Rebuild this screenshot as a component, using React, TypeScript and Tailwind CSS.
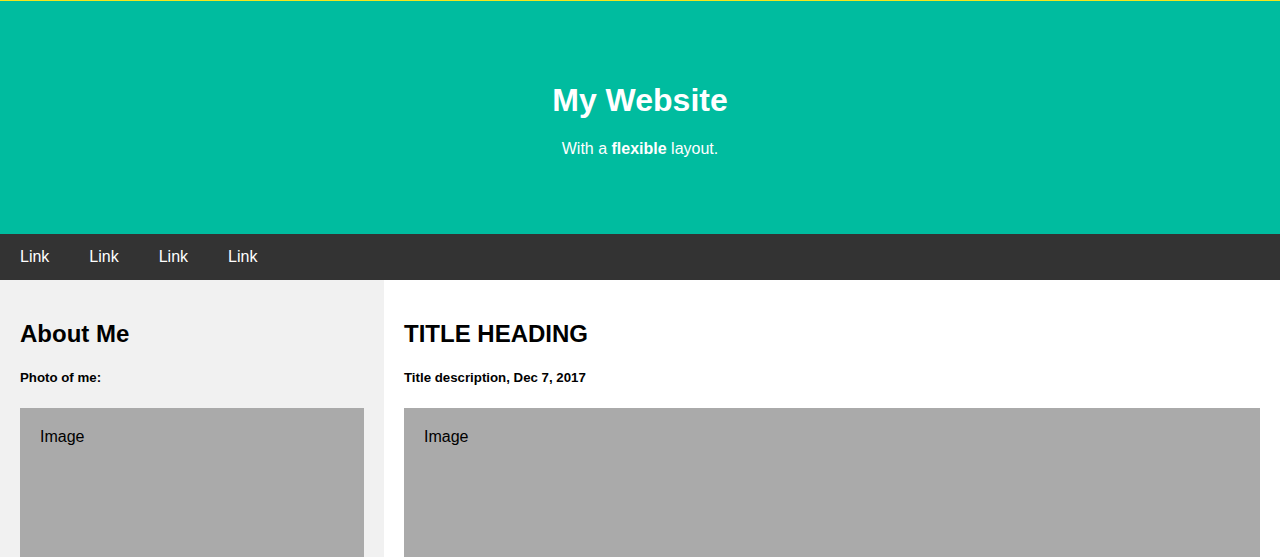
const links = ["Link", "Link", "Link", "Link"];

const FakeImage = () => (
  <div className="bg-[#aaaaaa] p-5 h-[200px] text-base leading-[18px]">Image</div>
);

export default function App() {
  return (
    <div className="min-h-[557px] bg-white text-black font-['Liberation_Sans',Arial,sans-serif]">
      <div className="h-px bg-[#f5e51b]" />
      <header className="bg-[#00bc9f] text-white text-center py-[60px]">
        <h1 className="text-[32px] font-bold leading-[36px] my-[21.44px]">My Website</h1>
        <p className="text-base leading-[18px] mb-4">
          With a <b>flexible</b> layout.
        </p>
      </header>
      <nav className="bg-[#333333] flex">
        {links.map((l, i) => (
          <a key={i} href="#" className="text-white text-base leading-[18px] px-5 py-[14px]">
            {l}
          </a>
        ))}
      </nav>
      <div className="flex">
        <div className="w-[30%] bg-[#f1f1f1] p-5">
          <h2 className="text-2xl font-bold leading-[27.5px] mt-[19.92px]">About Me</h2>
          <h5 className="text-[13.28px] font-bold leading-[15.3px] mt-[23.18px] mb-[22.18px]">Photo of me:</h5>
          <FakeImage />
        </div>
        <div className="w-[70%] bg-white p-5">
          <h2 className="text-2xl font-bold leading-[27.5px] mt-[19.92px]">TITLE HEADING</h2>
          <h5 className="text-[13.28px] font-bold leading-[15.3px] mt-[23.18px] mb-[22.18px]">
            Title description, Dec 7, 2017
          </h5>
          <FakeImage />
        </div>
      </div>
    </div>
  );
}
